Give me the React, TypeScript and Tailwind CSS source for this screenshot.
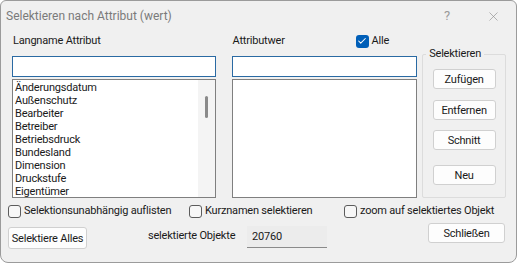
import { Check, X } from "lucide-react";

const attribute = [
  "Änderungsdatum",
  "Außenschutz",
  "Bearbeiter",
  "Betreiber",
  "Betriebsdruck",
  "Bundesland",
  "Dimension",
  "Druckstufe",
  "Eigentümer",
];

const font = { fontFamily: 'Roboto, "Noto Sans", sans-serif' };

function Box({ checked }: { checked?: boolean }) {
  if (checked) {
    return (
      <span className="w-[13px] h-[13px] shrink-0 rounded-[3px] bg-[#005fb8] flex items-center justify-center">
        <Check className="w-[10px] h-[10px] text-white" strokeWidth={2.5} />
      </span>
    );
  }
  return <span className="w-[13px] h-[13px] shrink-0 rounded-[3px] border border-[#5c5c5c] bg-[#f7f7f7]" />;
}

function Btn({ label, className }: { label: string; className: string }) {
  return (
    <button className={`h-[20px] rounded-[3px] border border-[#d0d0d0] bg-[#fdfdfd] text-[11px] tracking-[-0.2px] leading-none whitespace-nowrap text-[#1a1a1a] ${className}`}>
      {label}
    </button>
  );
}

export default function App() {
  return (
    <div
      style={font}
      className="w-[517px] h-[263px] bg-[#f0f0f0] border border-[#9b9b9b] rounded-b-[8px] rounded-t-[6px] overflow-hidden flex flex-col text-[11px] tracking-[-0.2px] leading-[14px] text-[#1a1a1a] whitespace-nowrap"
    >
      {/* titel */}
      <div className="h-[30px] flex items-center pl-[5px] shrink-0">
        <span className="text-[12px] tracking-normal text-[#7a7a7a]">Selektieren nach Attribut (wert)</span>
        <span className="ml-auto w-[46px] text-center text-[13px] text-[#9a9a9a]">?</span>
        <span className="w-[46px] flex justify-center">
          <X className="w-[15px] h-[15px] text-[#8a8a8a]" strokeWidth={1} />
        </span>
      </div>

      <div className="flex pl-[11px] pr-[10px] gap-[16px]">
        {/* links */}
        <div className="w-[204px] flex flex-col">
          <div className="h-[24px] flex items-end pb-[7px] pl-[1px]">Langname Attribut</div>
          <div className="h-[21px] mt-[1px] border border-[#2a6aa3] bg-white" />
          <div className="h-[119px] mt-[2px] border border-[#7f7f7f] bg-white flex overflow-hidden">
            <div className="flex-1 pl-[2px] pt-[1px]">
              {attribute.map((a) => (
                <div key={a} className="h-[13px] leading-[13px]">{a}</div>
              ))}
            </div>
            <div className="w-[17px] bg-[#f4f4f4] flex justify-center pt-[16px]">
              <div className="w-[3px] h-[22px] rounded-full bg-[#8a8a8a]" />
            </div>
          </div>
        </div>

        {/* mitte */}
        <div className="w-[186px] flex flex-col">
          <div className="h-[24px] flex items-end pb-[7px] pl-[1px]">
            <span>Attributwer</span>
            <span className="ml-auto mr-[28px] flex items-center gap-[3px]">
              <Box checked />
              <span>Alle</span>
            </span>
          </div>
          <div className="h-[21px] mt-[1px] border border-[#2a6aa3] bg-white" />
          <div className="h-[119px] mt-[2px] border border-[#7f7f7f] bg-white" />
        </div>

        {/* Selektieren */}
        <div className="relative w-[84px] mt-[23px] h-[144px] -ml-[11px] border border-[#dcdcdc] rounded-[2px] flex flex-col items-center pt-[14px]">
          <span className="absolute -top-[8px] left-[3px] px-[3px] bg-[#f0f0f0]">Selektieren</span>
          <Btn label="Zufügen" className="w-[63px]" />
          <Btn label="Entfernen" className="w-[63px] mt-[11px]" />
          <Btn label="Schnitt" className="w-[63px] mt-[10px]" />
          <Btn label="Neu" className="w-[63px] mt-[15px]" />
        </div>
      </div>

      {/* checkboxen */}
      <div className="flex items-center h-[16px] mt-[5px] pl-[7px]">
        <span className="flex items-center gap-[3px] w-[181px]">
          <Box />
          <span>Selektionsunabhängig auflisten</span>
        </span>
        <span className="flex items-center gap-[3px] w-[155px]">
          <Box />
          <span>Kurznamen selektieren</span>
        </span>
        <span className="flex items-center gap-[3px]">
          <Box />
          <span>zoom auf selektiertes Objekt</span>
        </span>
      </div>

      {/* unten */}
      <div className="flex items-start mt-[4px] pl-[7px]">
        <Btn label="Selektiere Alles" className="w-[79px] h-[22px] mt-[4px]" />
        <span className="ml-[61px] mt-[6px] w-[99px]">selektierte Objekte</span>
        <div className="mt-[3px] w-[80px] h-[22px] bg-[#ececec] border-b border-[#8a8a8a] flex items-center pl-[5px]">
          20760
        </div>
        <Btn label="Schließen" className="w-[77px] ml-auto mr-[11px]" />
      </div>
    </div>
  );
}
